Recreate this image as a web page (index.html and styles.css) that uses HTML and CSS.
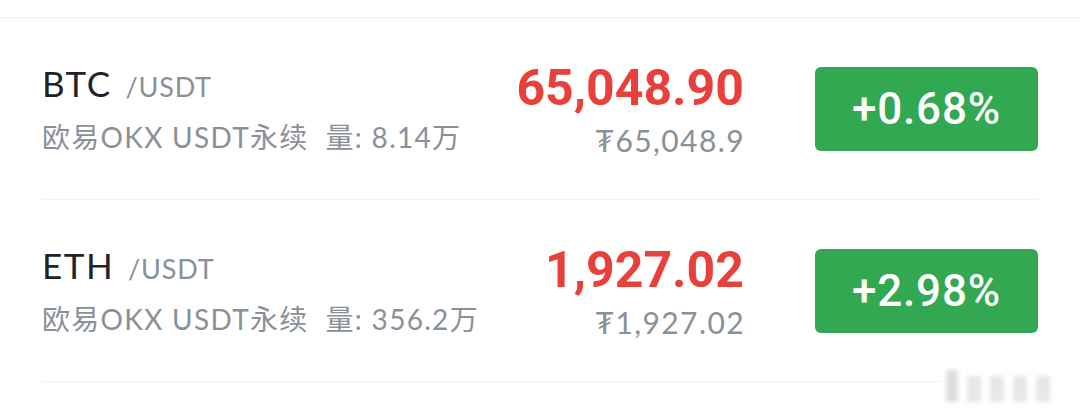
FILE: index.html
```html
<!DOCTYPE html>
<html lang="zh-CN">
<head>
<meta charset="utf-8">
<title>行情</title>
<link rel="stylesheet" href="styles.css">
</head>
<body>
<div class="market">
  <div class="row">
    <div class="pair">
      <div class="symbol"><span class="base">BTC</span><span class="quote">/USDT</span></div>
      <div class="meta">欧易OKX USDT永续&nbsp; 量: 8.14万</div>
    </div>
    <div class="price">
      <div class="last">65,048.90</div>
      <div class="fiat">₮65,048.9</div>
    </div>
    <div class="change">+0.68%</div>
  </div>
  <div class="row">
    <div class="pair">
      <div class="symbol"><span class="base">ETH</span><span class="quote">/USDT</span></div>
      <div class="meta">欧易OKX USDT永续&nbsp; 量: 356.2万</div>
    </div>
    <div class="price">
      <div class="last">1,927.02</div>
      <div class="fiat">₮1,927.02</div>
    </div>
    <div class="change">+2.98%</div>
  </div>
  <div class="mark">
    <span class="m1"></span><span class="m2"></span><span class="m3"></span><span class="m4"></span><span class="m5"></span>
  </div>
</div>
</body>
</html>
```
FILE: styles.css
```css
html, body {
  margin: 0;
  padding: 0;
  background: #ffffff;
}

.market {
  position: relative;
  width: 1080px;
  height: 415px;
  padding-top: 17px;
  box-sizing: border-box;
}

.market::before {
  content: "";
  display: block;
  height: 1px;
  background: #f2f3f4;
}

.row {
  display: flex;
  align-items: center;
  height: 181px;
  margin: 0 42px;
  border-bottom: 1px solid #f1f2f3;
}

.pair {
  flex: 1;
  display: flex;
  flex-direction: column;
  gap: 14px;
  margin-top: 2px;
}

.symbol {
  display: flex;
  align-items: baseline;
  font-family: "Lato", "Noto Sans CJK SC", sans-serif;
  line-height: 36px;
}

.base {
  font-size: 35px;
  color: #212328;
  letter-spacing: 1.5px;
}

.quote {
  font-size: 27px;
  color: #8a9099;
  margin-left: 14px;
  letter-spacing: 0.8px;
}

.meta {
  font-family: "Lato", "Noto Sans CJK SC", sans-serif;
  font-size: 28px;
  line-height: 36px;
  color: #8a9099;
  letter-spacing: 1.3px;
}

.price {
  display: flex;
  flex-direction: column;
  align-items: flex-end;
  margin-right: 71px;
  margin-top: 2px;
}

.last {
  font-family: "Roboto", sans-serif;
  font-weight: 700;
  font-size: 50px;
  line-height: 54px;
  color: #e8413b;
}

.fiat {
  font-family: "Lato", "DejaVu Sans", sans-serif;
  font-size: 30px;
  line-height: 38px;
  color: #8a9099;
  margin-top: 6px;
  letter-spacing: 1.4px;
  margin-right: -1px;
}

.change {
  flex: none;
  width: 223px;
  height: 84px;
  border-radius: 6px;
  background: #33a853;
  color: #ffffff;
  display: flex;
  align-items: center;
  justify-content: center;
  font-family: "Roboto", sans-serif;
  font-weight: 500;
  font-size: 44px;
  letter-spacing: 0.8px;
}

/* faint corner stamp */
.mark {
  position: absolute;
  left: 940px;
  top: 370px;
  display: flex;
  align-items: flex-end;
  gap: 9px;
  padding: 0 6px;
  background: #ffffff;
  filter: blur(2px);
}

.mark span {
  display: block;
  width: 14px;
  height: 26px;
  background: #e6e7e8;
}

.mark .m1 {
  width: 12px;
  height: 32px;
  background: #dcdddf;
}
```
